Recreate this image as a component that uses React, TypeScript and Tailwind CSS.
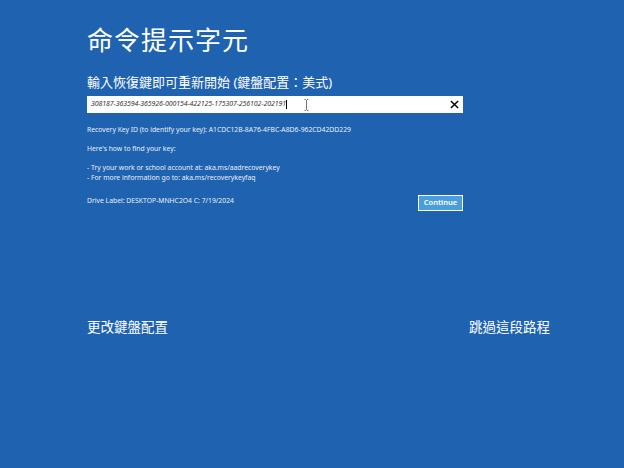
import React from 'react';

export default function App() {
  return (
    <div className="w-[624px] h-[468px] bg-[#1f63b0] text-white overflow-hidden" style={{ fontFamily: '"Noto Sans", "Noto Sans CJK TC", sans-serif' }}>
      <div className="pl-[87px] pr-[161px] pt-[24px]">
        <h1 className="text-[26px] leading-[32px] tracking-[1px]">命令提示字元</h1>
        <p className="mt-[17px] text-[13px] leading-[18px]">輸入恢復鍵即可重新開始 (鍵盤配置：美式)</p>

        <div className="mt-[5px] h-[17px] bg-white flex items-center px-[4px] relative">
          <span className="text-[7px] italic text-[#333] tracking-[-0.1px]">308187-363594-365926-000154-422125-175307-256102-202191</span>
          <span className="w-px h-[9px] bg-black" />
          {/* mouse I-beam */}
          <svg className="absolute left-[217px] top-[3px]" width="5" height="12" viewBox="0 0 5 12">
            <path d="M0.5 0.5H2M3 0.5H4.5M2.5 1V11M0.5 11.5H2M3 11.5H4.5" stroke="#777" strokeWidth="1" fill="none" />
          </svg>
          <span className="ml-auto text-black">
            <svg width="9" height="9" viewBox="0 0 10 10"><path d="M1 1L9 9M9 1L1 9" stroke="#000" strokeWidth="1.6" /></svg>
          </span>
        </div>

        <div className="mt-[12px] text-[6.8px] leading-[10px] text-[#e8eef8]">
          <p>Recovery Key ID (to identify your key): A1CDC12B-8A76-4FBC-A8D6-962CD42DD229</p>
          <p className="mt-[9px]">Here's how to find your key:</p>
          <p className="mt-[9px]">- Try your work or school account at: aka.ms/aadrecoverykey</p>
          <p>- For more information go to: aka.ms/recoverykeyfaq</p>
          <div className="flex items-start justify-between mt-[12px]">
            <p className="mt-px">Drive Label: DESKTOP-MNHC2O4 C: 7/19/2024</p>
            <button className="w-[45px] h-[16px] border border-white bg-[#4a9edb] text-[7.5px] font-semibold text-white leading-none">Continue</button>
          </div>
        </div>
      </div>

      <div className="flex justify-between pl-[87px] pr-[74px] mt-[107px] text-[13.5px] leading-[18px]">
        <span>更改鍵盤配置</span>
        <span>跳過這段路程</span>
      </div>
    </div>
  );
}
